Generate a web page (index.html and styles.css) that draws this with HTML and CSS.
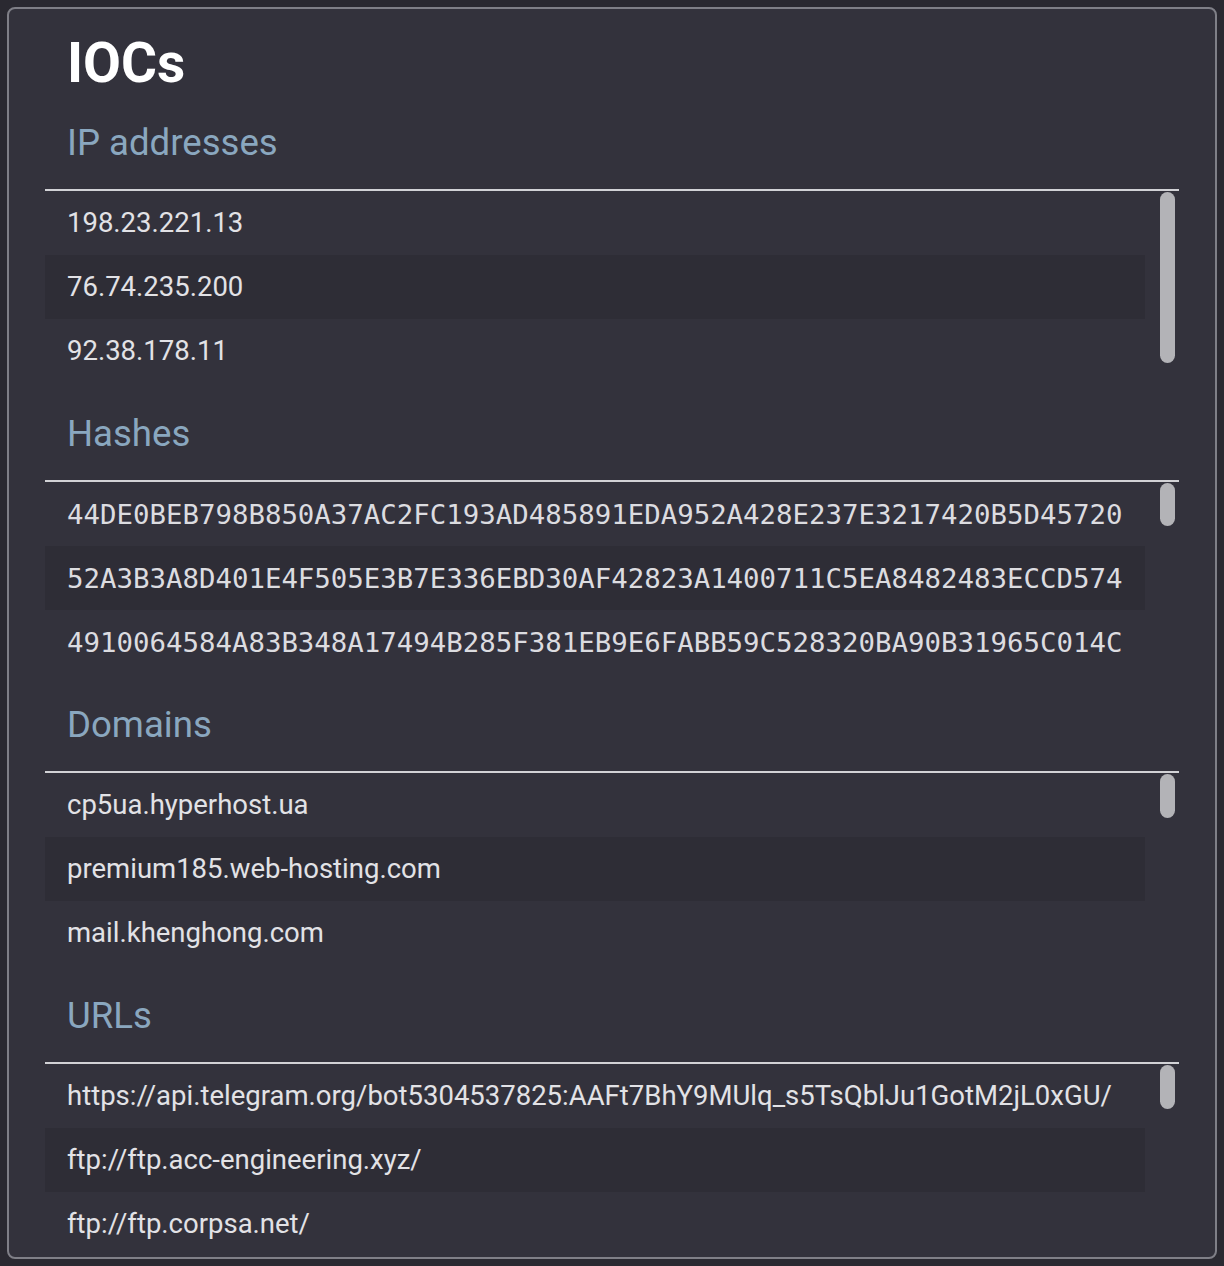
FILE: index.html
```html
<!DOCTYPE html>
<html lang="en">
<head>
    <meta charset="UTF-8">
    <meta name="viewport" content="width=device-width, initial-scale=1.0">
    <title>IOCs</title>
    <link rel="stylesheet" href="styles.css">
</head>
<body>
    <div class="panel">
        <h1>IOCs</h1>

        <section class="ioc-section">
            <h2>IP addresses</h2>
            <div class="ioc-list">
                <ul>
                    <li>198.23.221.13</li>
                    <li>76.74.235.200</li>
                    <li>92.38.178.11</li>
                </ul>
                <span class="scroll-thumb" style="height: 171px"></span>
            </div>
        </section>

        <section class="ioc-section">
            <h2>Hashes</h2>
            <div class="ioc-list">
                <ul class="mono">
                    <li>44DE0BEB798B850A37AC2FC193AD485891EDA952A428E237E3217420B5D45720</li>
                    <li>52A3B3A8D401E4F505E3B7E336EBD30AF42823A1400711C5EA8482483ECCD574</li>
                    <li>4910064584A83B348A17494B285F381EB9E6FABB59C528320BA90B31965C014C</li>
                </ul>
                <span class="scroll-thumb" style="height: 43px"></span>
            </div>
        </section>

        <section class="ioc-section">
            <h2>Domains</h2>
            <div class="ioc-list">
                <ul>
                    <li>cp5ua.hyperhost.ua</li>
                    <li>premium185.web-hosting.com</li>
                    <li>mail.khenghong.com</li>
                </ul>
                <span class="scroll-thumb" style="height: 44px"></span>
            </div>
        </section>

        <section class="ioc-section">
            <h2>URLs</h2>
            <div class="ioc-list">
                <ul>
                    <li>https://api.telegram.org/bot5304537825:AAFt7BhY9MUlq_s5TsQblJu1GotM2jL0xGU/</li>
                    <li>ftp://ftp.acc-engineering.xyz/</li>
                    <li>ftp://ftp.corpsa.net/</li>
                </ul>
                <span class="scroll-thumb" style="height: 44px"></span>
            </div>
        </section>
    </div>
</body>
</html>
```

FILE: styles.css
```css
:root {
    --page-bg: #2a2931;
    --panel-bg: #33323c;
    --panel-border: #7f7f87;
    --row-alt: #2e2d36;
    --heading: #8aa7bf;
    --text: #e2e2e6;
    --rule: #d2d2d6;
    --thumb: #b3b3b7;
}

* {
    box-sizing: border-box;
}

body {
    margin: 0;
    padding: 7px;
    background-color: var(--page-bg);
    font-family: Roboto, "Noto Sans", sans-serif;
    color: var(--text);
}

.panel {
    background: var(--panel-bg);
    border: 2px solid var(--panel-border);
    border-radius: 8px;
    padding: 24px 36px 0;
}

h1 {
    margin: 0 0 0 22px;
    font-size: 55px;
    line-height: 60px;
    font-weight: 700;
    color: #ffffff;
}

.ioc-section h2 {
    margin: 28px 0 25px 22px;
    font-size: 36.6px;
    line-height: 43px;
    font-weight: 400;
    color: var(--heading);
}

/* list box with its own scroll indicator on the right */
.ioc-list {
    position: relative;
    height: 195px;
    border-top: 2px solid var(--rule);
}

.scroll-thumb {
    position: absolute;
    top: 1px;
    right: 4px;
    width: 15px;
    border-radius: 8px;
    background: var(--thumb);
}

.ioc-list ul {
    list-style: none;
    margin: 0 34px 0 0;
    padding: 0;
}

.ioc-list li {
    height: 64px;
    line-height: 64px;
    padding: 0 22px;
    font-size: 27.5px;
    white-space: nowrap;
}

.ioc-list li:nth-child(even) {
    background: var(--row-alt);
}

.ioc-list .mono li {
    font-family: "DejaVu Sans Mono", "Liberation Mono", monospace;
    font-size: 27.4px;
    line-height: 66px;
    color: #dcdce0;
}
```
